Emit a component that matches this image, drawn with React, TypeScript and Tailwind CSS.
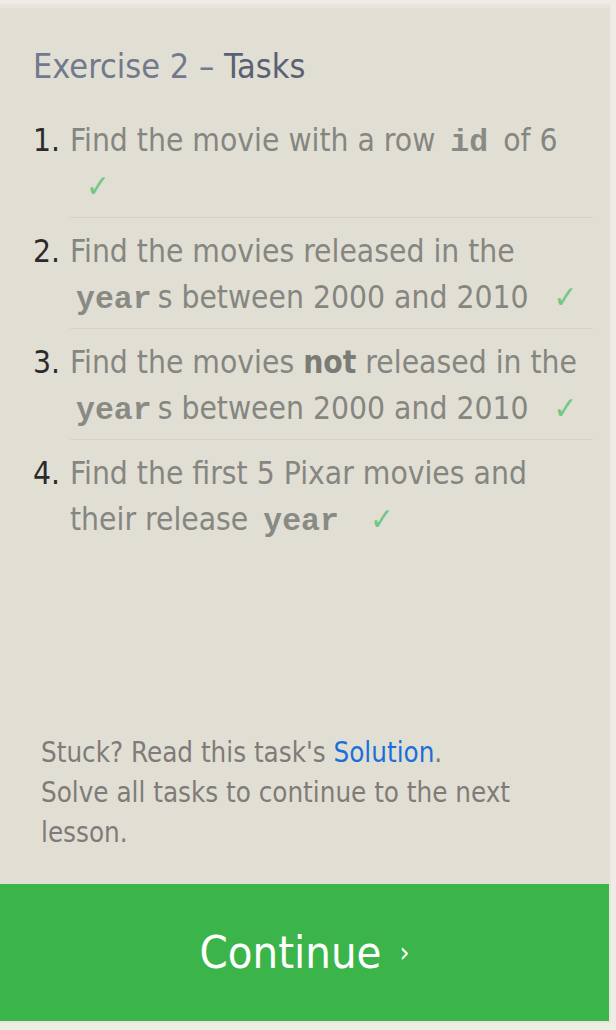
import React from 'react';

const sans = "font-['DejaVu_Sans_Condensed',_'DejaVu_Sans',_sans-serif]";
const mono = "font-['Liberation_Mono',_monospace]";

function Code({ children }: { children: React.ReactNode }) {
    return <code className={`${mono} font-bold leading-none text-[#8a8a85] px-[6px]`}>{children}</code>;
}

function Check() {
    return <span className="text-[#72c883] leading-none ml-[16px]">✓</span>;
}

const tasks: React.ReactNode[] = [
    <>Find the movie with a row <Code>id</Code> of 6 <Check /></>,
    <>Find the movies released in the <Code>year</Code>s between 2000 and 2010 <Check /></>,
    <>Find the movies <span className="font-bold text-[#7b7b76]">not</span> released in the <Code>year</Code>s between 2000 and 2010 <Check /></>,
    <>Find the first 5 Pixar movies and their release <Code>year</Code> <Check /></>,
];

export default function App() {
    return (
        <div className={`min-h-[1030px] bg-[#efece5] pt-[4px] pb-[7px] ${sans}`}>
            <div className="w-[611px] h-[1019px] flex flex-col bg-[#e1dfd4] border-t-4 border-r-2 border-b-2 border-[#e7e5dd]">
                {/* Tasks */}
                <div className="pl-[33px] pr-[16px] pt-[36px]">
                    <h2 className="text-[34px] leading-[45px] text-[#717a8d]">
                        Exercise 2 – <span className="text-[#5a6173]">Tasks</span>
                    </h2>

                    <ol className="mt-[18px]">
                        {tasks.map((t, i) => (
                            <li key={i} className="flex text-[31.5px] leading-[46px]">
                                <span className="w-[37px] shrink-0 pt-[10px] text-[#2b2b2b]">{i + 1}.</span>
                                <div
                                    className={`flex-1 text-[#868681] pt-[10px] pb-[8px] ${
                                        i < tasks.length - 1 ? 'border-b border-[#d5d3c9]' : ''
                                    }`}
                                >
                                    {t}
                                </div>
                            </li>
                        ))}
                    </ol>
                </div>

                {/* Footer */}
                <div className="mt-auto pl-[41px] pr-[30px] pb-[32px] text-[27.5px] leading-[40px] text-[#807b78]">
                    <p>
                        Stuck? Read this task's <a className="text-[#1b6fd9]">Solution</a>.
                    </p>
                    <p>Solve all tasks to continue to the next lesson.</p>
                </div>

                <button className="h-[137px] w-full bg-[#3bb54a] text-white text-[45px] flex items-center justify-center gap-[18px]">
                    Continue <span className="text-[28px]">›</span>
                </button>
            </div>
        </div>
    );
}
